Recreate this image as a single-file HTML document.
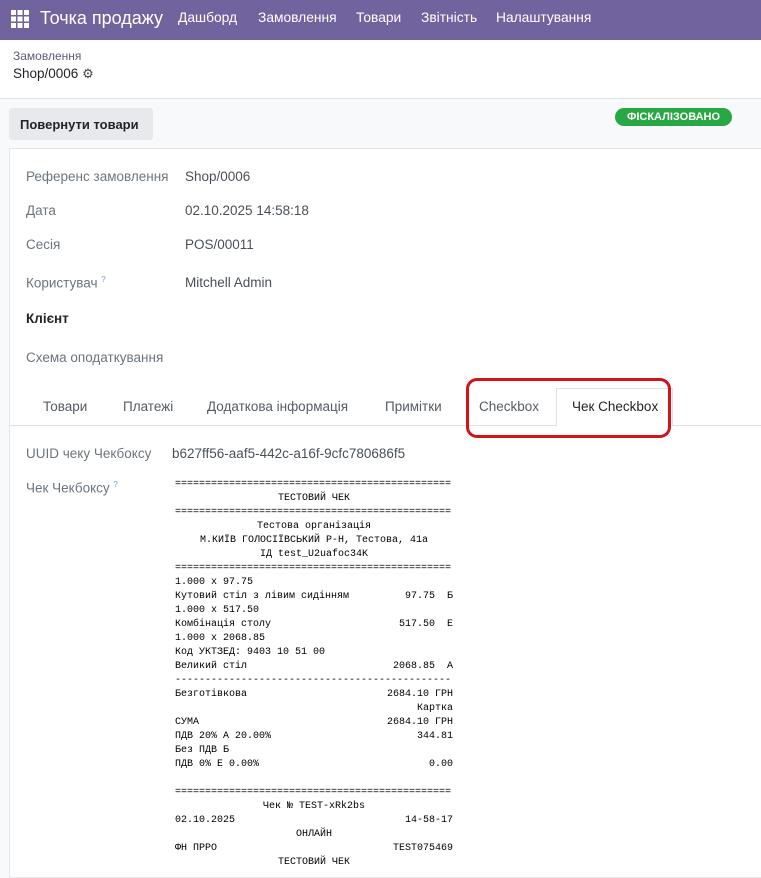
<!DOCTYPE html>
<html><head><meta charset="utf-8"><style>
*{box-sizing:border-box;margin:0;padding:0}
body{width:761px;height:869px;overflow:hidden;background:#f8f9fa;font-family:"Liberation Sans","Noto Sans CJK SC",sans-serif;color:#495057;position:relative;font-size:13px}
.nav{position:absolute;left:0;top:0;width:761px;height:40px;background:#71639e;color:#fff}
.nav span{position:absolute;top:10px;font-size:13.8px}
.top{position:absolute;left:0;top:40px;width:761px;height:59px;background:#fff;border-bottom:1px solid #dee2e6}
.btn{position:absolute;left:9px;top:108px;width:144px;height:32px;background:#e7e9ec;border-radius:3px;color:#212529;font-weight:bold;font-size:13px;padding:9px 0 0 11px}
.badge{position:absolute;left:615px;top:108px;width:117px;height:18px;background:#28a745;border-radius:9px;color:#fff;font-weight:bold;font-size:11px;text-align:center;line-height:18px}
.sheet{position:absolute;left:9px;top:148px;width:760px;height:730px;background:#fff;border:1px solid #e3e6ea}
.l{position:absolute;left:26px;font-size:13.5px;color:#6c757d}
.v{position:absolute;left:185px;font-size:13.5px;color:#495057}
sup{font-size:8px;color:#6c9bd2}
.tabs{position:absolute;left:10px;top:425px;width:751px;border-top:1px solid #dee2e6}
.t{position:absolute;top:399px;font-size:13.5px;color:#555c63}
.act{position:absolute;left:556px;top:388px;width:117px;height:38px;background:#fff;border:1px solid #dee2e6;border-bottom:none}
.red{position:absolute;left:466px;top:378px;width:205px;height:60px;border:3px solid #d3121a;border-radius:11px}
.rc{position:absolute;left:175px;top:478px;width:278px;font-family:"Liberation Mono","Noto Sans CJK SC",monospace;font-size:10px;line-height:14px;color:#000}
.rc div{white-space:pre;height:14px}
.c{text-align:center}
.j{display:flex;justify-content:space-between}
.r{text-align:right}
</style></head><body>
<div class="nav">
<svg style="position:absolute;left:11px;top:10px" width="18" height="18" viewBox="0 0 18 18" fill="#fff"><rect x="0" y="0" width="5" height="5"/><rect x="6.5" y="0" width="5" height="5"/><rect x="13" y="0" width="5" height="5"/><rect x="0" y="6.5" width="5" height="5"/><rect x="6.5" y="6.5" width="5" height="5"/><rect x="13" y="6.5" width="5" height="5"/><rect x="0" y="13" width="5" height="5"/><rect x="6.5" y="13" width="5" height="5"/><rect x="13" y="13" width="5" height="5"/></svg>
<span style="left:40px;top:8px;font-size:18px">Точка продажу</span>
<span style="left:178px">Дашборд</span><span style="left:258px">Замовлення</span><span style="left:356px">Товари</span><span style="left:421px">Звітність</span><span style="left:496px">Налаштування</span>
</div>
<div class="top">
<div style="position:absolute;left:13px;top:9px;font-size:12px;color:#5f5a7e">Замовлення</div>
<div style="position:absolute;left:13px;top:26px;font-size:13.5px;color:#212529">Shop/0006 <span style="font-size:13px;color:#444">⚙</span></div>
</div>
<div class="btn">Повернути товари</div>
<div class="badge">ФІСКАЛІЗОВАНО</div>
<div class="sheet"></div>
<div class="l" style="top:169px">Референс замовлення</div><div class="v" style="top:169px">Shop/0006</div>
<div class="l" style="top:203px">Дата</div><div class="v" style="top:203px">02.10.2025 14:58:18</div>
<div class="l" style="top:237px">Сесія</div><div class="v" style="top:237px">POS/00011</div>
<div class="l" style="top:275px">Користувач <sup>?</sup></div><div class="v" style="top:275px">Mitchell Admin</div>
<div class="l" style="top:311px;color:#212529;font-weight:bold">Клієнт</div>
<div class="l" style="top:350px">Схема оподаткування</div>
<div class="tabs"></div>
<div class="act"></div>
<div class="t" style="left:43px">Товари</div><div class="t" style="left:123px">Платежі</div><div class="t" style="left:207px">Додаткова інформація</div><div class="t" style="left:385px">Примітки</div><div class="t" style="left:479px">Checkbox</div><div class="t" style="left:572px;color:#212529">Чек Checkbox</div>
<div class="red"></div>
<div class="l" style="top:446px">UUID чеку Чекбоксу</div><div class="v" style="top:446px;left:172px">b627ff56-aaf5-442c-a16f-9cfc780686f5</div>
<div class="l" style="top:480px">Чек Чекбоксу <sup>?</sup></div>
<div class="rc">
<div>==============================================</div>
<div class="c">ТЕСТОВИЙ ЧЕК</div>
<div>==============================================</div>
<div class="c">Тестова організація</div>
<div class="c">М.КИЇВ ГОЛОСІЇВСЬКИЙ Р-Н, Тестова, 41а</div>
<div class="c">ІД test_U2uafoc34K</div>
<div>==============================================</div>
<div>1.000 x 97.75</div>
<div class="j"><span>Кутовий стіл з лівим сидінням</span><span>97.75  Б</span></div>
<div>1.000 x 517.50</div>
<div class="j"><span>Комбінація столу</span><span>517.50  Е</span></div>
<div>1.000 x 2068.85</div>
<div>Код УКТЗЕД: 9403 10 51 00</div>
<div class="j"><span>Великий стіл</span><span>2068.85  А</span></div>
<div>----------------------------------------------</div>
<div class="j"><span>Безготівкова</span><span>2684.10 ГРН</span></div>
<div class="r">Картка</div>
<div class="j"><span>СУМА</span><span>2684.10 ГРН</span></div>
<div class="j"><span>ПДВ 20% А 20.00%</span><span>344.81</span></div>
<div>Без ПДВ Б</div>
<div class="j"><span>ПДВ 0% Е 0.00%</span><span>0.00</span></div>
<div></div>
<div>==============================================</div>
<div class="c">Чек № TEST-xRk2bs</div>
<div class="j"><span>02.10.2025</span><span>14-58-17</span></div>
<div class="c">ОНЛАЙН</div>
<div class="j"><span>ФН ПРРО</span><span>TEST075469</span></div>
<div class="c">ТЕСТОВИЙ ЧЕК</div>
</div>
</body></html>
